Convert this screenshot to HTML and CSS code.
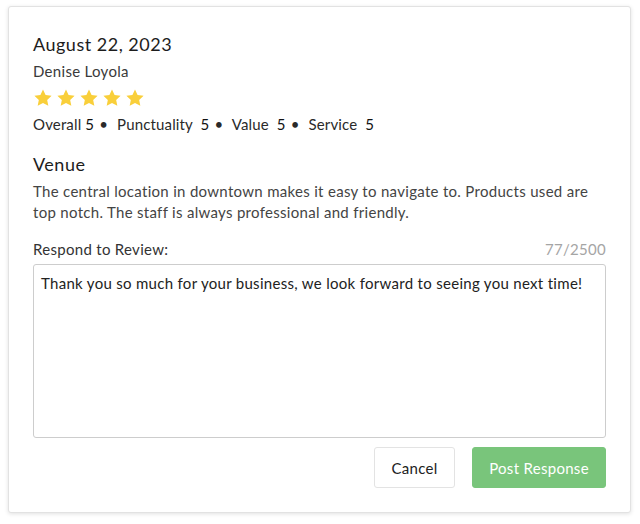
FILE: index.html
```html
<!DOCTYPE html>
<html>
<head>
	<meta charset="UTF-8">
	<title>Review response</title>
	<link rel="stylesheet" href="styles.css">
</head>
<body>
<div class="card">
	<h2 class="date">August 22, 2023</h2>
	<div class="author">Denise Loyola</div>
	<div class="stars">
		<svg viewBox="0 0 24 24"><path d="M12 1.8l3.1 6.6 7.2.9-5.3 5 1.4 7.1L12 17.9l-6.4 3.5 1.4-7.1-5.3-5 7.2-.9z"/></svg>
		<svg viewBox="0 0 24 24"><path d="M12 1.8l3.1 6.6 7.2.9-5.3 5 1.4 7.1L12 17.9l-6.4 3.5 1.4-7.1-5.3-5 7.2-.9z"/></svg>
		<svg viewBox="0 0 24 24"><path d="M12 1.8l3.1 6.6 7.2.9-5.3 5 1.4 7.1L12 17.9l-6.4 3.5 1.4-7.1-5.3-5 7.2-.9z"/></svg>
		<svg viewBox="0 0 24 24"><path d="M12 1.8l3.1 6.6 7.2.9-5.3 5 1.4 7.1L12 17.9l-6.4 3.5 1.4-7.1-5.3-5 7.2-.9z"/></svg>
		<svg viewBox="0 0 24 24"><path d="M12 1.8l3.1 6.6 7.2.9-5.3 5 1.4 7.1L12 17.9l-6.4 3.5 1.4-7.1-5.3-5 7.2-.9z"/></svg>
	</div>
	<div class="scores">
		<span>Overall <b>5</b></span><span class="dot">•</span>
		<span>Punctuality &nbsp;<b>5</b></span><span class="dot">•</span>
		<span>Value &nbsp;<b>5</b></span><span class="dot">•</span>
		<span>Service &nbsp;<b>5</b></span>
	</div>
	<h3 class="venue">Venue</h3>
	<p class="review">The central location in downtown makes it easy to navigate to. Products used are top notch. The staff is always professional and friendly.</p>
	<div class="respond-head">
		<label for="reply">Respond to Review:</label>
		<span class="count">77/2500</span>
	</div>
	<textarea id="reply" class="reply">Thank you so much for your business, we look forward to seeing you next time!</textarea>
	<div class="actions">
		<button class="btn cancel">Cancel</button>
		<button class="btn post">Post Response</button>
	</div>
</div>
</body>
</html>
```

FILE: styles.css
```css
body {
	margin: 0;
	padding: 6px 8px;
	background: #fff;
	font-family: Lato, "Liberation Sans", sans-serif;
	letter-spacing: 0.3px;
	color: #222;
}
.card {
	width: 573px;
	padding: 24px;
	border: 1px solid #e2e2e2;
	border-radius: 3px;
	box-shadow: 0 1px 4px rgba(0, 0, 0, 0.12);
	background: #fff;
}
.date {
	margin: 0;
	font-size: 18px;
	font-weight: 400;
	line-height: 26px;
	letter-spacing: 0.5px;
	color: #1d1d1d;
}
.author {
	margin-top: 4px;
	font-size: 15px;
	line-height: 20px;
	color: #3a3a3a;
}
.stars {
	display: flex;
	gap: 3px;
	margin-top: 7px;
}
.stars svg {
	width: 20px;
	height: 20px;
	fill: #f9cf3a;
}
.scores {
	margin-top: 5px;
	font-size: 15px;
	line-height: 22px;
	letter-spacing: 0.15px;
	color: #2a2a2a;
}
.scores b {
	font-weight: 400;
	color: #111;
}
.dot {
	margin: 0 5px;
}
.venue {
	margin: 16px 0 0;
	font-size: 18px;
	font-weight: 400;
	line-height: 26px;
	letter-spacing: 0.5px;
	color: #1d1d1d;
}
.review {
	margin: 4px 0 0;
	font-size: 15px;
	line-height: 21px;
	color: #444;
}
.respond-head {
	display: flex;
	justify-content: space-between;
	margin-top: 16px;
	font-size: 15px;
	line-height: 20px;
	color: #333;
}
.count {
	color: #a5a5a5;
}
.reply {
	display: block;
	box-sizing: border-box;
	width: 100%;
	height: 174px;
	margin-top: 5px;
	padding: 8px 7px;
	border: 1px solid #cdcdcd;
	border-radius: 3px;
	font-family: Lato, "Liberation Sans", sans-serif;
	font-size: 15px;
	line-height: 20px;
	letter-spacing: 0.3px;
	color: #222;
	resize: none;
}
.actions {
	display: flex;
	justify-content: flex-end;
	gap: 17px;
	margin-top: 9px;
}
.btn {
	height: 41px;
	padding: 0 12px;
	border-radius: 3px;
	font-family: Lato, "Liberation Sans", sans-serif;
	font-size: 15px;
	letter-spacing: 0.3px;
}
.cancel {
	width: 81px;
	background: #fff;
	border: 1px solid #e3e3e3;
	color: #222;
}
.post {
	width: 134px;
	background: #79c57b;
	border: 1px solid #79c57b;
	color: #fff;
}
```
